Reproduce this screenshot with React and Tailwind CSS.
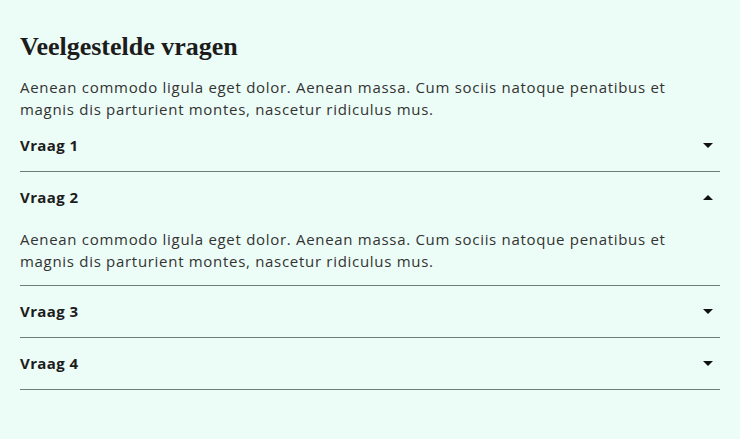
import { useState } from "react";

const ITEMS = [
  { q: "Vraag 1", a: "Aenean commodo ligula eget dolor. Aenean massa. Cum sociis natoque penatibus et magnis dis parturient montes, nascetur ridiculus mus." },
  { q: "Vraag 2", a: "Aenean commodo ligula eget dolor. Aenean massa. Cum sociis natoque penatibus et magnis dis parturient montes, nascetur ridiculus mus." },
  { q: "Vraag 3", a: "Aenean commodo ligula eget dolor. Aenean massa. Cum sociis natoque penatibus et magnis dis parturient montes, nascetur ridiculus mus." },
  { q: "Vraag 4", a: "Aenean commodo ligula eget dolor. Aenean massa. Cum sociis natoque penatibus et magnis dis parturient montes, nascetur ridiculus mus." },
];

function Caret({ up }) {
  return (
    <svg width="10" height="5" viewBox="0 0 10 5" className="shrink-0">
      {up ? <polygon points="0,5 10,5 5,0" fill="#111" /> : <polygon points="0,0 10,0 5,5" fill="#111" />}
    </svg>
  );
}

export default function App() {
  const [open, setOpen] = useState(1);

  return (
    <div className="min-h-[439px] bg-[#ecfcf6] px-5 pt-[30px] text-[#333] font-['Open_Sans',sans-serif]">
      <h2 className="font-['Liberation_Serif',serif] text-[26px] font-bold leading-[34px] text-[#1c1c1c] mb-[12px]">
        Veelgestelde vragen
      </h2>
      <p className="text-[15px] leading-[22px] tracking-[0.7px]">
        Aenean commodo ligula eget dolor. Aenean massa. Cum sociis natoque penatibus et magnis dis parturient montes, nascetur ridiculus mus.
      </p>
      <div>
        {ITEMS.map((item, i) => (
          <div key={i} className="border-b border-[#6f7d78]">
            <button
              onClick={() => setOpen(open === i ? -1 : i)}
              className="w-full h-[51px] flex items-center justify-between pr-[7px] text-left"
            >
              <span className="text-[15px] font-bold tracking-[0.4px] text-[#1c1c1c]">{item.q}</span>
              <Caret up={open === i} />
            </button>
            {open === i && (
              <p className="text-[15px] leading-[22px] tracking-[0.7px] pt-[5px] pb-[13px]">{item.a}</p>
            )}
          </div>
        ))}
      </div>
    </div>
  );
}
